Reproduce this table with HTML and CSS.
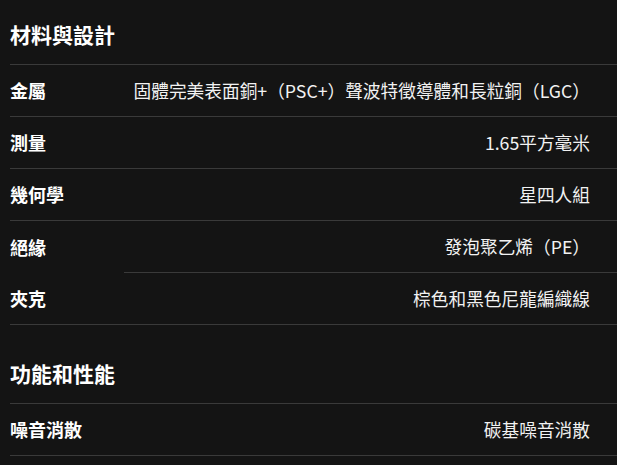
FILE: index.html
```html
<!DOCTYPE html>
<html lang="zh-Hant">
<head>
<meta charset="utf-8">
<title>規格</title>
<link rel="stylesheet" href="styles.css">
</head>
<body>
<div class="specs">
  <section class="group">
    <h2 class="group-title group-title--first">材料與設計</h2>
    <div class="row">
      <div class="label">金屬</div>
      <div class="value">固體完美表面銅+（PSC+）聲波特徵導體和長粒銅（LGC）</div>
    </div>
    <div class="row">
      <div class="label">測量</div>
      <div class="value">1.65平方毫米</div>
    </div>
    <div class="row">
      <div class="label">幾何學</div>
      <div class="value">星四人組</div>
    </div>
    <div class="row row--partial">
      <div class="label">絕緣</div>
      <div class="value">發泡聚乙烯（PE）</div>
    </div>
    <div class="row">
      <div class="label">夾克</div>
      <div class="value">棕色和黑色尼龍編織線</div>
    </div>
  </section>
  <section class="group">
    <h2 class="group-title">功能和性能</h2>
    <div class="row">
      <div class="label">噪音消散</div>
      <div class="value">碳基噪音消散</div>
    </div>
  </section>
</div>
</body>
</html>
```
FILE: styles.css
```css
html, body {
  margin: 0;
  padding: 0;
  background: #141414;
}

body {
  font-family: "Noto Sans CJK TC", "Noto Sans", sans-serif;
  color: #f2f2f2;
  overflow: hidden;
}

.specs {
  padding-left: 10px;
}

.group-title {
  margin: 0;
  font-size: 21px;
  font-weight: 700;
  line-height: 30px;
  color: #ffffff;
  padding: 33px 0 15px;
  border-bottom: 1px solid #3a3a3a;
}

.group-title--first {
  padding-top: 19px;
}

.row {
  display: grid;
  grid-template-columns: 114px 1fr;
  align-items: center;
  height: 51px;
  border-bottom: 1px solid #3a3a3a;
}

.row--partial {
  border-bottom: none;
  height: 52px;
}

.row--partial .value {
  align-self: stretch;
  display: flex;
  align-items: center;
  justify-content: flex-end;
  border-bottom: 1px solid #3a3a3a;
}

.label {
  font-size: 18px;
  font-weight: 700;
  color: #ffffff;
  padding-bottom: 1px;
}

.value {
  font-size: 17.7px;
  font-weight: 400;
  text-align: right;
  padding-right: 27px;
  padding-bottom: 1px;
  color: #f2f2f2;
  white-space: nowrap;
}
```
